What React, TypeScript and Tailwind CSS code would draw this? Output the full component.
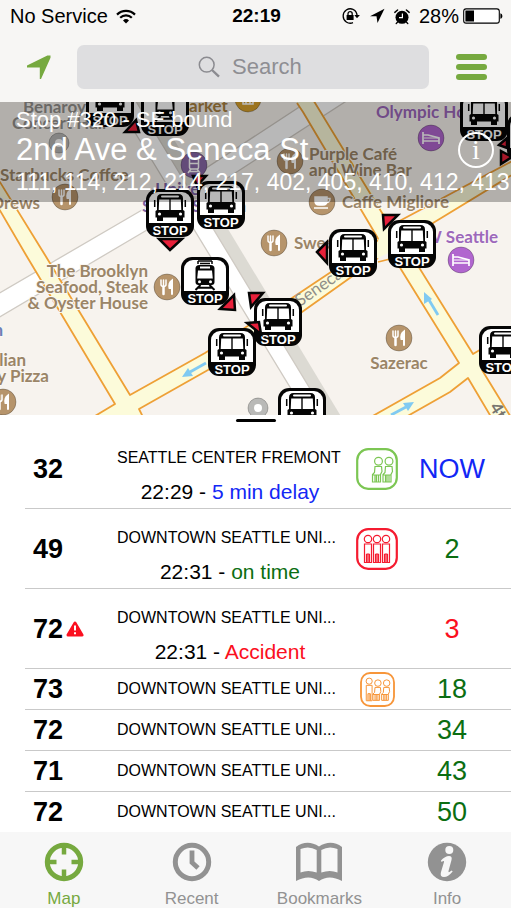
import { useState } from "react";
import type { ReactNode } from "react";

const sans = "font-['Liberation_Sans',Arial,sans-serif]";

/* ---------- status bar ---------- */

function StatusBar() {
  return (
    <div className="grid h-8 grid-cols-[1fr_auto_1fr] items-center pr-2 pl-[10px] text-[20px] leading-6 text-black">
      <div className="flex items-center gap-2">
        <span>No Service</span>
        <svg viewBox="0 0 20 15" className="h-[15px] w-5" fill="none" stroke="#000" strokeWidth="2.2">
          <path d="M1 5.6a12.8 12.8 0 0 1 18 0" />
          <path d="M4.2 8.8a8.3 8.3 0 0 1 11.6 0" />
          <path d="M7 11.4a4.4 4.4 0 0 1 6 0L10 14.6z" fill="#000" stroke="none" />
        </svg>
      </div>
      <span className="text-[19px] font-bold">22:19</span>
      <div className="flex items-center justify-end gap-2">
        <svg viewBox="0 0 20 16" className="h-4 w-5" fill="none" stroke="#000" strokeWidth="1.3">
          <path d="M12 1.3A7.2 7.2 0 1 0 12 14.7" />
          <path d="M12 1.3A7.2 7.2 0 0 1 16 8" />
          <path d="M13.3 7h5.6L16 10.3z" fill="#000" stroke="none" />
          <rect x="5.6" y="7" width="7" height="5" fill="#000" stroke="none" />
          <path d="M7 7.2V5.7a2.1 2.1 0 0 1 4.2 0v1.5" />
        </svg>
        <svg viewBox="0 0 16 16" className="h-4 w-4">
          <path d="M15.5.8 1 8.2h6.5L8.5 15z" fill="#000" />
        </svg>
        <svg viewBox="0 0 18 17" className="h-[17px] w-[18px]" fill="none">
          <circle cx="9" cy="9.3" r="6.5" fill="#000" />
          <path d="M9.400 5.500v4.100H6" stroke="#fff" strokeWidth="1.2" />
          <path d="M1.800 4.400 4.600 2M16.200 4.400 13.400 2M4.4 14.3l-1.2 1.3M13.600 14.3l1.2 1.3" stroke="#000" strokeWidth="1.4" strokeLinecap="round" />
        </svg>
        <span>28%</span>
        <svg viewBox="0 0 40 16" className="-ml-1 h-4 w-10">
          <rect x=".7" y=".9" width="35.6" height="14.2" rx="2.4" fill="#fff" stroke="#000" strokeWidth="1.1" />
          <rect x="2.4" y="2.5" width="8.6" height="11" fill="#000" />
          <path d="M37.4 5.2c2.6.6 2.6 5 0 5.6z" fill="#000" />
        </svg>
      </div>
    </div>
  );
}

function Header() {
  return (
    <header className="h-[102px] bg-[#f7f6f4]">
      <StatusBar />
      <div className="flex items-center pt-[13px] pr-6">
        <button aria-label="My location" className="flex w-[77px] justify-center">
          <svg viewBox="0 0 24 25" className="h-[25px] w-6">
            <path d="M23.5.6v2.2L14 24h-1.2V12.6L0 12.4V10.6L20.4.4z" fill="#76a93f" />
          </svg>
        </button>
        <label className="flex h-11 flex-1 items-center justify-center gap-3 rounded-[7px] bg-[#dedee0]">
          <svg viewBox="0 0 22 22" className="h-[22px] w-[22px]" fill="none" stroke="#8b8b90">
            <circle cx="8.7" cy="8.7" r="7.4" strokeWidth="1.5" />
            <path d="m14 14 7 6.600" strokeWidth="2.4" />
          </svg>
          <input
            type="text"
            aria-label="Search"
            placeholder="Search"
            className="w-[76px] bg-transparent text-[22px] leading-7 text-[#333] outline-none placeholder:text-[#8e8e93]"
          />
        </label>
        <button aria-label="Menu" className="ml-[27px] flex w-[31px] flex-col gap-1">
          <span className="h-[6px] w-full rounded-sm bg-[#76a93f]" />
          <span className="h-[6px] w-full rounded-sm bg-[#76a93f]" />
          <span className="h-[6px] w-full rounded-sm bg-[#76a93f]" />
        </button>
      </div>
    </header>
  );
}

/* ---------- map ---------- */

type StopKind = "bus" | "rail";

function Stop({ x, y, kind = "bus" }: { x: number; y: number; kind?: StopKind }) {
  return (
    <g transform={`translate(${x} ${y})`}>
      <rect width="48" height="48" rx="11" fill="#050505" />
      <path d="M3 34V12a9 9 0 0 1 9-9h24a9 9 0 0 1 9 9v22z" fill="#fff" />
      {kind === "bus" ? (
        <g>
          <path d="M11 9.500Q11 5 15.500 5h17Q37 5 37 9.500V21l1.500 1v6.500H37V32h-6v-3.500H17V32h-6v-3.500H9.500V22l1.500-1z" fill="#050505" />
          <rect x="15" y="6.500" width="18" height="2" rx="1" fill="#fff" />
          <path d="M13.200 10.500h10.100V21H12.700zM24.700 10.500h10.100l.5 10.500H24.700z" fill="#fff" />
          <circle cx="13.500" cy="25" r="1.600" fill="#fff" />
          <circle cx="34.500" cy="25" r="1.600" fill="#fff" />
          <path d="M8.700 11v7M39.300 11v7" stroke="#050505" strokeWidth="1.500" />
        </g>
      ) : (
        <g>
          <path d="M17 4h14M19 6.500h10M17 4v3M31 4v3" stroke="#050505" strokeWidth="1.500" />
          <path d="M14.500 25V11.500q0-3.500 4-3.500h11q4 0 4 3.500V25q0 3-3 3h-13q-3 0-3-3z" fill="#050505" />
          <rect x="19" y="9.500" width="10" height="2" fill="#fff" />
          <path d="M17 13.500h14l.8 8H16.200z" fill="#fff" />
          <circle cx="18.500" cy="24.800" r="1.500" fill="#fff" />
          <circle cx="29.500" cy="24.800" r="1.500" fill="#fff" />
          <path d="m19.500 28-5 5M28.500 28l5 5M17 30.800h14" stroke="#050505" strokeWidth="2" />
        </g>
      )}
      <text x="24" y="45.500" textAnchor="middle" fontSize="13" className="font-['Liberation_Sans',Arial,sans-serif] font-bold" fill="#fff">
        STOP
      </text>
    </g>
  );
}

type PoiKind = "food" | "coffee" | "bed" | "rail" | "dot" | "shop";

const poiFill: Record<PoiKind, string> = {
  food: "#b6946b",
  coffee: "#b6946b",
  bed: "#b166cf",
  rail: "#8a68a8",
  dot: "#b9b9b7",
  shop: "#d9a12c",
};

function Poi({ x, y, kind }: { x: number; y: number; kind: PoiKind }) {
  const r = kind === "dot" ? 10 : 13;
  return (
    <g transform={`translate(${x} ${y})`} fill="none" stroke="#fff">
      <circle r={r} fill={poiFill[kind]} stroke="#00000040" strokeWidth="1" />
      {kind === "food" && (
        <g strokeWidth="1.500" strokeLinecap="round">
          <path d="M-6-7v4.500q0 2 2.500 2t2.500-2V-7M-3.500-7V-.5" />
          <path d="M-3.500 0v7" strokeWidth="2.500" />
          <path d="M5-6.500v13.500M5-6.500Q1.500-4 2.500 1H5z" fill="#fff" strokeWidth="2" />
        </g>
      )}
      {kind === "coffee" && (
        <g strokeWidth="1.500">
          <path d="M-7-5H5v4q0 4-4 4h-4q-4 0-4-4z" fill="#fff" />
          <path d="M5-3.500h3q0 4-4 4M-8 6H6" />
        </g>
      )}
      {kind === "bed" && (
        <g strokeWidth="1.700">
          <path d="M-8-6V6M-8 3H8M8 6V0L-3-3H-8" />
          <path d="M-7 0H8" strokeWidth="1" />
        </g>
      )}
      {kind === "rail" && (
        <g strokeWidth="1.500">
          <rect x="-4.500" y="-7" width="9" height="11" rx="1.500" />
          <path d="M-4-1.500h8M-3 4l-3 4M3 4l3 4M-4.500 6.500h9" />
        </g>
      )}
      {kind === "shop" && <path d="M-7-2H7M-6-5h12M-5 0v5H5V0M-2 0v5M2 0v5" strokeWidth="1.500" />}
      {kind === "dot" && <circle r="4" fill="#fff" stroke="none" />}
    </g>
  );
}

const stops: { x: number; y: number; kind?: StopKind }[] = [
  { x: 86, y: 79 },
  { x: 141, y: 88, kind: "rail" },
  { x: 197, y: 181 },
  { x: 146, y: 189 },
  { x: 181, y: 257, kind: "rail" },
  { x: 254, y: 298 },
  { x: 208, y: 328 },
  { x: 278, y: 388 },
  { x: 329, y: 229 },
  { x: 388, y: 220 },
  { x: 479, y: 326 },
  { x: 507, y: 114 },
  { x: 460, y: 93 },
];

const headings = [
  "159,239 182,239 170,250",
  "125,132 136,120 139,132",
  "193,176 206,176 197,186",
  "220,309 234,295 235,310",
  "249,293 263,293 251,307",
  "247,323 259,322 261,334",
  "383,215 398,215 384,229",
  "317,252 327,242 327,263",
  "499,145 507,138 507,148",
  "501,151 512,157 501,164",
];

const pois: { x: number; y: number; kind: PoiKind }[] = [
  { x: 59, y: 143, kind: "dot" },
  { x: 258, y: 408, kind: "dot" },
  { x: 65, y: 197, kind: "food" },
  { x: 167, y: 287, kind: "food" },
  { x: 274, y: 243, kind: "food" },
  { x: 3, y: 402, kind: "food" },
  { x: 399, y: 338, kind: "food" },
  { x: 290, y: 161, kind: "food" },
  { x: 322, y: 202, kind: "coffee" },
  { x: 431, y: 138, kind: "bed" },
  { x: 461, y: 260, kind: "bed" },
  { x: 194, y: 165, kind: "rail" },
  { x: 248, y: 99, kind: "shop" },
];

type Label = { x: number; y: number; text: string; color?: string; anchor?: "start" | "middle" | "end" };

const brown = "#9b8567";
const purple = "#9d68bb";

const labels: Label[] = [
  { x: 23, y: 113, text: "Benaroya", color: "#94918c" },
  { x: 12, y: 129, text: "Concert Hall", color: "#94918c" },
  { x: 189, y: 112, text: "arket", color: "#a98140" },
  { x: 0, y: 181, text: "Starbucks Coffee" },
  { x: 40, y: 209, text: "Drews", anchor: "end" },
  { x: 376, y: 118, text: "Olympic Hotel", color: purple },
  { x: 309, y: 160, text: "Purple Café" },
  { x: 309, y: 176, text: "and Wine Bar" },
  { x: 342, y: 208, text: "Caffe Migliore" },
  { x: 294, y: 249, text: "Sweet" },
  { x: 498, y: 243, text: "W Seattle", color: purple, anchor: "end" },
  { x: 148, y: 277, text: "The Brooklyn", anchor: "end" },
  { x: 148, y: 293, text: "Seafood, Steak", anchor: "end" },
  { x: 148, y: 309, text: "& Oyster House", anchor: "end" },
  { x: 3, y: 336, text: "n", color: "#6c7fb5", anchor: "end" },
  { x: 26, y: 366, text: "lian", anchor: "end" },
  { x: 49, y: 382, text: "y Pizza", anchor: "end" },
  { x: 399, y: 369, text: "Sazerac", anchor: "middle" },
  { x: 194, y: 195, text: "University", color: "#7c62a3", anchor: "middle" },
  { x: 194, y: 212, text: "Street Station", color: "#7c62a3", anchor: "middle" },
];

function CityMap() {
  return (
    <svg viewBox="0 102 511 313" preserveAspectRatio="xMidYMid slice" className="block h-[313px] w-full bg-[#f7f3ee]">
      <rect x="-500" y="102" width="1511" height="313" fill="#f7f3ee" />
      {/* side streets */}
      <g stroke="#cfcac3" strokeWidth="1.300" fill="#fff">
        <path d="M-4 295 142 210 310 100 348 100 147 230-4 319z" />
        <path d="M133 98 149 98 348 428 324 415z" fill="#dcdad3" stroke="none" />
        <path d="M114 98H134L329 420H310z" />
      </g>
      {/* arterials */}
      <g fill="#fcfbda" stroke="#eea036" strokeWidth="1.800" strokeLinejoin="round">
        <path d="M-5 174 45 255 130 395 205 353 292 298 382 242 385 213 316 103 309 92H290L297 103 379 238 378 258 302 312 208 370 139 409 147 425 80 425 115 404 26 255-5 202z" stroke="none" />
        <path d="M-5 174 45 255 130 395 205 353 292 298 379 240 303 112 297 103M80 425 115 404 26 255-5 202M147 425 139 409 208 370 302 312 378 258" fill="none" />
        <path d="M309 92 385 213 390 229 520 158V170L433 223 410 253 473 354 520 328V340L482 370 520 432H500L468 378 450 392 390 426H355L440 378 459 363 390 252 370 262 379 238z" stroke="none" />
        <path d="M312 98 390 226 520 157M520 170 433 223 410 253 473 354 520 326M520 341 482 370 520 432M500 432 468 378 450 392 390 426M355 426 440 378 459 363 394 258 378 262" fill="none" />
      </g>
      {/* one-way arrows */}
      <g stroke="#80caf2" strokeWidth="2.800" fill="#80caf2">
        <path d="m206 363-16 9" />
        <path d="m182 377 11-1-5-8z" stroke="none" />
        <path d="m438 315-9-15" />
        <path d="m424 292 0 12 8-5z" stroke="none" />
        <path d="m391 415 15-8" />
        <path d="m414 402-11 1 5 8z" stroke="none" />
      </g>
      <g className="font-[Lato,'Open_Sans',sans-serif]">
        <text transform="translate(300 307) rotate(-35)" fontSize="17" fill="#8f8e88">
          Seneca
        </text>
        <text transform="translate(489 407) rotate(58)" fontSize="17" fill="#77756f" className="font-bold">
          4th Ave
        </text>
        {labels.map((l) => (
          <text
            key={l.text}
            x={l.x}
            y={l.y}
            fontSize="17"
            textAnchor={l.anchor ?? "start"}
            fill={l.color ?? brown}
            stroke="#faf7f3"
            strokeWidth="2"
            paintOrder="stroke"
            className="font-bold"
          >
            {l.text}
          </text>
        ))}
      </g>
      {pois.map((p) => (
        <Poi key={`${p.x}-${p.y}`} {...p} />
      ))}
      {stops.map((s) => (
        <Stop key={`${s.x}-${s.y}`} {...s} />
      ))}
      {headings.map((points) => (
        <polygon key={points} points={points} fill="#e8203a" stroke="#050505" strokeWidth="2.500" />
      ))}
    </svg>
  );
}

function MapPanel() {
  return (
    <section className="relative overflow-hidden">
      <CityMap />
      <div className="absolute inset-x-0 top-0 h-[100px] overflow-hidden bg-black/28 pt-[6px] pl-4 whitespace-nowrap text-white">
        <p className="text-[22px] leading-6">Stop #320 - SE bound</p>
        <h1 className="text-[31px] leading-9">2nd Ave &amp; Seneca St</h1>
        <p className="text-[23px] leading-7">111, 114, 212, 214, 217, 402, 405, 410, 412, 413</p>
        <button
          aria-label="Stop details"
          className="absolute top-[30px] right-[17px] flex size-9 items-center justify-center rounded-full border-2 border-white font-['Liberation_Serif',serif] text-[28px] leading-8"
        >
          i
        </button>
      </div>
    </section>
  );
}

/* ---------- arrivals ---------- */

function Standing({ x }: { x: number }) {
  return (
    <g>
      <circle cx={x} cy="11" r="3.700" />
      <path d={`M${x - 3.500} 16h7V34.500h-7zM${x - 1.500} 26v8.500M${x} 26v8.500M${x + 1.500} 26v8.500M${x - 1.500} 26h3`} />
    </g>
  );
}

function Seated({ x }: { x: number }) {
  return (
    <g>
      <circle cx={x} cy="13.300" r="3.900" />
      <path d={`M${x - 3.500} 18.500h6.500l.5 5-1.500 3V34h-8v-7.500l2-2zM${x - 3.500} 27v7M${x - 2} 27v7M${x} 27v7M${x - 6} 27h7.500`} />
    </g>
  );
}

type Crowd = "low" | "medium" | "full";

function CrowdIcon({ level, small }: { level: Crowd; small?: boolean }) {
  const color = { low: "#7cc653", medium: "#f7963a", full: "#f51b30" }[level];
  return (
    <svg
      viewBox="0 0 42 42"
      role="img"
      aria-label={`Crowding: ${level}`}
      className={small ? "size-[35px]" : "size-[42px]"}
      fill="none"
      stroke={color}
      strokeWidth="1.200"
    >
      <rect x="1.200" y="1.200" width="39.600" height="39.600" rx="11" strokeWidth="2.200" />
      {level === "low" && (
        <>
          <Seated x={22.5} />
          <Seated x={33} />
        </>
      )}
      {level === "full" && (
        <>
          <Standing x={12} />
          <Standing x={21} />
          <Standing x={30} />
        </>
      )}
      {level === "medium" && (
        <>
          <Standing x={11} />
          <Seated x={21.5} />
          <Seated x={32} />
        </>
      )}
    </svg>
  );
}

type Arrival = {
  route: string;
  destination: string;
  eta: string;
  etaClass: string;
  time?: string;
  status?: string;
  statusClass?: string;
  crowd?: Crowd;
  alert?: boolean;
};

const downtown = "DOWNTOWN SEATTLE UNI...";
const green = "text-[#0b6e12]";
const blue = "text-[#1227f5]";
const red = "text-[#fb0f20]";

const arrivals: Arrival[] = [
  { route: "32", destination: "SEATTLE CENTER FREMONT", eta: "NOW", etaClass: blue, time: "22:29", status: "5 min delay", statusClass: blue, crowd: "low" },
  { route: "49", destination: downtown, eta: "2", etaClass: green, time: "22:31", status: "on time", statusClass: green, crowd: "full" },
  { route: "72", destination: downtown, eta: "3", etaClass: red, time: "22:31", status: "Accident", statusClass: red, alert: true },
  { route: "73", destination: downtown, eta: "18", etaClass: green, crowd: "medium" },
  { route: "72", destination: downtown, eta: "34", etaClass: green },
  { route: "71", destination: downtown, eta: "43", etaClass: green },
  { route: "72", destination: downtown, eta: "50", etaClass: green },
];

function ArrivalRow({ arrival }: { arrival: Arrival }) {
  const { route, destination, eta, etaClass, time, status, statusClass, crowd, alert } = arrival;
  return (
    <li
      className={`ml-[25px] flex items-center border-b border-[#c9c9c9] pr-[26px] last:h-10 last:border-b-0 ${
        time ? "h-20" : "h-[41px]"
      }`}
    >
      <div className="flex w-[92px] shrink-0 items-center gap-[3px] pl-2">
        <span className="text-[27px] leading-8 font-bold">{route}</span>
        {alert && (
          <svg viewBox="0 0 18 16" role="img" aria-label="Alert" className="h-4 w-[18px]">
            <path d="M9 2 16 14H2z" fill="#fb1020" stroke="#fb1020" strokeWidth="3" strokeLinejoin="round" />
            <path d="M9 4.500v5M9 11.200v2" stroke="#fff" strokeWidth="2" />
          </svg>
        )}
      </div>
      <div className="min-w-0 flex-1 whitespace-nowrap">
        <p className={`text-[16px] leading-6 ${time ? "pt-3" : ""}`}>{destination}</p>
        {time && (
          <p className="pt-[10px] pl-2 text-center text-[21px] leading-6">
            {time} - <span className={statusClass}>{status}</span>
          </p>
        )}
      </div>
      <div className="flex w-[84px] shrink-0 justify-center">{crowd && <CrowdIcon level={crowd} small={!time} />}</div>
      <span className={`w-[66px] shrink-0 text-center text-[27px] leading-8 ${etaClass}`}>{eta}</span>
    </li>
  );
}

/* ---------- tab bar ---------- */

const tabs: { name: string; icon: ReactNode }[] = [
  {
    name: "Map",
    icon: (
      <g fill="none" stroke="currentColor">
        <circle cx="20" cy="20" r="16.700" strokeWidth="5" />
        <path d="M20 4v8.500M20 27.500v8.500M4 20h8.500M27.500 20h8.500" strokeWidth="4.500" />
      </g>
    ),
  },
  {
    name: "Recent",
    icon: (
      <g fill="none" stroke="currentColor">
        <circle cx="20" cy="20" r="16.700" strokeWidth="5" />
        <path d="M20 8.500v12l6 5.500" strokeWidth="4.800" />
      </g>
    ),
  },
  {
    name: "Bookmarks",
    icon: (
      <path
        fill="currentColor"
        fillRule="evenodd"
        d="M-3 5Q8-3 20 4.500 32-3 43 5V39Q30 32 20 39 10 32-3 39zM1.500 7V30.500Q9 27.500 17.700 30.500V8Q10 3.500 1.500 7zM22.300 8V30.500Q31 27.500 38.500 30.500V7Q30 3.500 22.300 8z"
      />
    ),
  },
  {
    name: "Info",
    icon: (
      <g>
        <circle cx="20" cy="20" r="19.200" fill="currentColor" />
        <circle cx="22.300" cy="8" r="4" fill="#f7f7f7" />
        <path
          d="M14 18.500q4-4.500 8-4.500 3.500 0 2.500 4L21.500 29q-.5 2.500 3-.5l1.200 1Q21 35 17 35q-4.500 0-3-5l3-10q.5-2-2.500 0z"
          fill="#f7f7f7"
        />
      </g>
    ),
  },
];

export default function App() {
  const [active, setActive] = useState("Map");
  return (
    <div className={`flex min-h-screen flex-col bg-white text-black ${sans}`}>
      <Header />
      <MapPanel />
      <main className="flex-1">
        <div className="flex h-[14px] justify-center pt-1">
          <span className="h-[3px] w-10 rounded-full bg-black" />
        </div>
        <ul>
          {arrivals.map((a, i) => (
            <ArrivalRow key={i} arrival={a} />
          ))}
        </ul>
      </main>
      <nav className="grid h-[76px] grid-cols-4 bg-[#f7f7f7]">
        {tabs.map((t) => (
          <button
            key={t.name}
            onClick={() => setActive(t.name)}
            className={`flex flex-col items-center gap-[7px] pt-[10px] ${t.name === active ? "text-[#76a93f]" : "text-[#929292]"}`}
          >
            <svg viewBox="0 0 40 40" className="size-10 shrink-0 overflow-visible">
              {t.icon}
            </svg>
            <span className="text-[17px] leading-5">{t.name}</span>
          </button>
        ))}
      </nav>
    </div>
  );
}
